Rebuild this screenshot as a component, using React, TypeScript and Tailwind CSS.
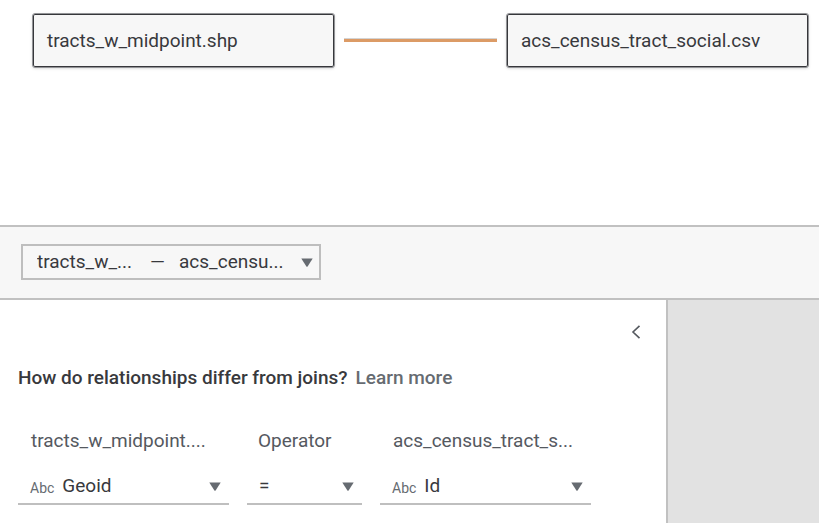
import type { ReactNode } from "react";

function Caret() {
  return (
    <svg
      aria-hidden="true"
      viewBox="0 0 12 9"
      className="pointer-events-none h-[9px] w-3 shrink-0 fill-[#666b71]"
    >
      <path d="M.3.5h11.4L6.600 8.500a.8.8 0 0 1-1.200 0Z" />
    </svg>
  );
}

function TableNode({ name }: { name: string }) {
  return (
    <button
      type="button"
      className="h-[55px] w-[303px] shrink-0 rounded-[3px] border border-[#939497] bg-[#f7f7f7] px-[14px] text-left shadow-sm inset-ring inset-ring-[#36373b]"
    >
      {name}
    </button>
  );
}

type FieldProps = {
  id: string;
  label: string;
  value: string;
  width: string;
  inset: string;
  prefix?: ReactNode;
};

function Field({ id, label, value, width, inset, prefix }: FieldProps) {
  return (
    <div className={`flex shrink-0 flex-col ${width}`}>
      <label htmlFor={id} className={`h-10 whitespace-nowrap text-[#55595f] ${inset}`}>
        {label}
      </label>
      <div className="flex h-9 items-center border-b-2 border-[#bfbfbf] pr-2 pl-3">
        {prefix}
        <select
          id={id}
          defaultValue={value}
          className="min-w-0 flex-1 appearance-none bg-transparent outline-none"
        >
          <option>{value}</option>
        </select>
        <Caret />
      </div>
    </div>
  );
}

const abc = <span className="mr-2 pt-1 text-sm text-[#666b71]">Abc</span>;

export default function App() {
  return (
    <div className="flex min-h-screen flex-col bg-white font-['Roboto',sans-serif] text-[19px] leading-6 text-[#38393d]">
      <section className="flex h-[225px] items-start pt-[13px] pr-[10px] pl-8">
        <TableNode name="tracts_w_midpoint.shp" />
        <div className="mx-[9px] mt-[25px] h-1 flex-1 border-t border-[#d4d4d4] bg-[#dc9b66]" />
        <TableNode name="acs_census_tract_social.csv" />
      </section>

      <section className="h-[75px] border-y-2 border-[#c1c1c1] bg-[#f7f7f7] px-[21px] pt-[17px]">
        <div className="flex h-9 w-[300px] items-center border-2 border-[#bebebe] pr-[6px] pl-[14px]">
          <select
            aria-label="Relationship"
            className="min-w-0 flex-1 appearance-none bg-transparent outline-none"
          >
            <option>{"tracts_w_...\u00a0\u00a0\u00a0\u2009—\u00a0\u00a0\u00a0acs_censu..."}</option>
          </select>
          <Caret />
        </div>
      </section>

      <main className="flex flex-1">
        <section className="w-[668px] shrink-0 border-r-2 border-[#c1c1c1]">
          <div className="flex justify-end pt-5 pr-[18px]">
            <button
              type="button"
              aria-label="Collapse panel"
              className="flex size-6 items-center justify-center"
            >
              <svg
                aria-hidden="true"
                viewBox="0 0 10 14"
                className="h-[14px] w-[10px] fill-none stroke-[#55595f] stroke-[1.6]"
              >
                <path d="M8.5.8 2 7l6.500 6.200" />
              </svg>
            </button>
          </div>
          <p className="mt-[22px] pl-[18px] font-medium">
            How do relationships differ from joins?
            <a href="#learn-more" className="ml-2 text-[#666b71]">
              Learn more
            </a>
          </p>
          <div className="mt-[39px] flex gap-[18px] px-[18px] pb-[18px]">
            <Field id="left-field" label="tracts_w_midpoint...." value="Geoid" width="w-[211px]" inset="pl-[13px]" prefix={abc} />
            <Field id="operator" label="Operator" value="=" width="w-[115px]" inset="pl-[11px]" />
            <Field id="right-field" label="acs_census_tract_s..." value="Id" width="w-[211px]" inset="pl-[13px]" prefix={abc} />
          </div>
        </section>
        <aside className="flex-1 bg-[#e2e2e2]" />
      </main>
    </div>
  );
}
